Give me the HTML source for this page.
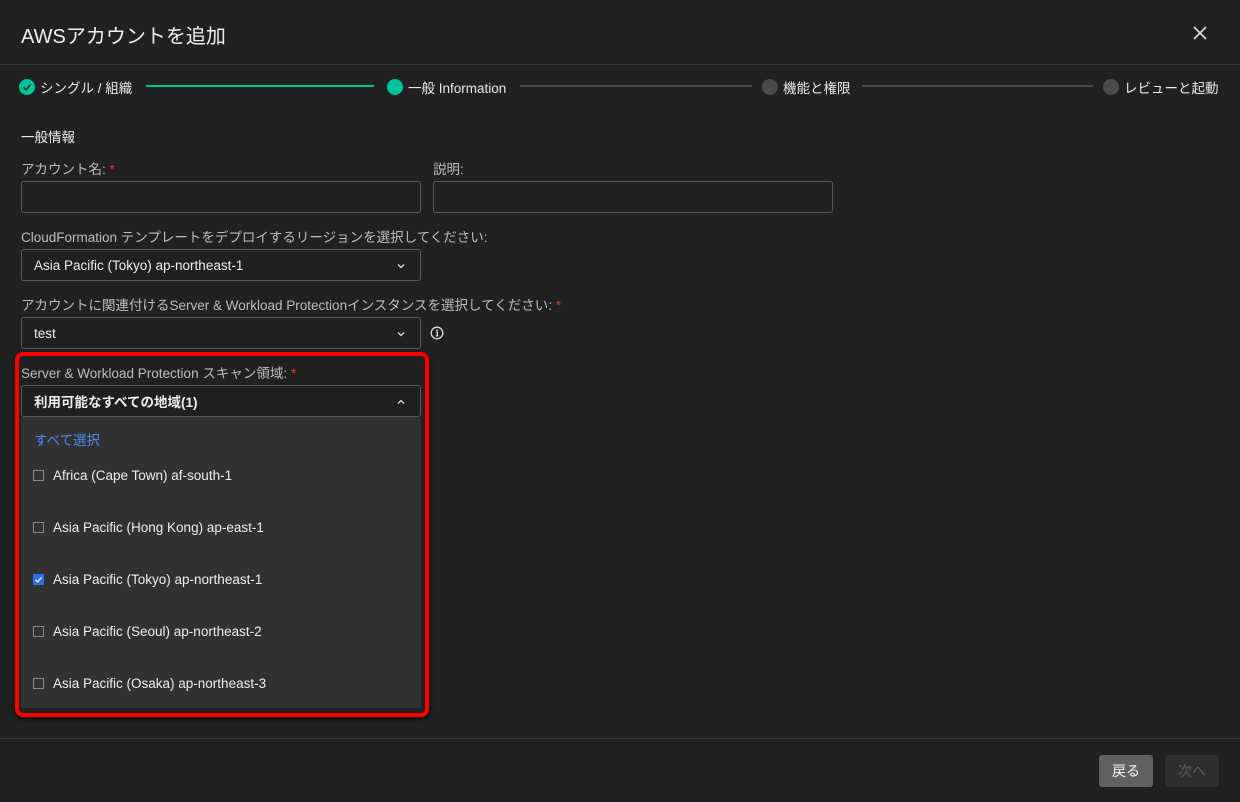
<!DOCTYPE html>
<html><head><meta charset="utf-8"><style>
*{box-sizing:border-box;margin:0;padding:0}
body{width:1240px;height:802px;background:#212121;font-family:"Liberation Sans","Noto Sans CJK JP",sans-serif;color:#e6e6e6;position:relative;overflow:hidden;font-size:13.5px}
.abs{position:absolute}
.title{left:21px;top:20px;font-size:20px;color:#f0f0f0}
.hline{left:0;width:1240px;height:1px;background:#3a3a3a}
.step{top:77px;font-size:13.5px;color:#e8e8e8;display:flex;align-items:center;white-space:nowrap}
.dot{width:16px;height:16px;border-radius:50%;background:#4a4a4a;margin-right:5px;display:inline-block}
.dot.on{background:#00c39a}
.line{top:85px;height:2px;background:#4a4a4a}
.lbl{font-size:13.5px;color:#bdbdbd;white-space:nowrap}
.req{color:#e53935}
.inp{border:1px solid #5a5a5a;border-radius:3px;background:#202020;height:32px}
.sel{display:flex;align-items:center;padding-left:12px;color:#eee;font-size:13.5px}
.chev{position:absolute;right:14px;top:12px}
.opt{left:33px;display:flex;align-items:center;font-size:13.5px;color:#eee}
.cb{width:11px;height:11px;border:1px solid #8a8a8a;margin-right:9px;background:transparent}
.cb.on{background:#2e6df0;border-color:#2e6df0;position:relative}
.btn{top:755px;height:32px;border-radius:3px;font-size:14px;display:flex;align-items:center;justify-content:center}
</style></head><body>
<div class="abs title">AWSアカウントを追加</div>
<svg class="abs" style="left:1192px;top:25px" width="16" height="16" viewBox="0 0 16 16"><path d="M2 2L14 14M14 2L2 14" stroke="#e0e0e0" stroke-width="1.6"/></svg>
<div class="abs hline" style="top:64px"></div>

<div class="abs step" style="left:19px"><span class="dot on" style="position:relative"><svg width="16" height="16" viewBox="0 0 16 16" style="position:absolute;left:0;top:0"><path d="M4.5 8.3L7 10.8L11.5 5.5" stroke="#1d1d1d" stroke-width="1.4" fill="none"/></svg></span>シングル / 組織</div>
<div class="abs line" style="left:146px;width:228px;background:#00c39a"></div>
<div class="abs step" style="left:387px"><span class="dot on"></span>一般 Information</div>
<div class="abs line" style="left:520px;width:232px"></div>
<div class="abs step" style="left:762px"><span class="dot"></span>機能と権限</div>
<div class="abs line" style="left:862px;width:231px"></div>
<div class="abs step" style="left:1103px"><span class="dot"></span>レビューと起動</div>

<div class="abs" style="left:21px;top:126px;font-size:13.5px;color:#eee">一般情報</div>
<div class="abs lbl" style="left:21px;top:158px">アカウント名: <span class="req">*</span></div>
<div class="abs inp" style="left:21px;top:181px;width:400px"></div>
<div class="abs lbl" style="left:433px;top:158px">説明:</div>
<div class="abs inp" style="left:433px;top:181px;width:400px"></div>

<div class="abs lbl" style="left:21px;top:226px">CloudFormation テンプレートをデプロイするリージョンを選択してください:</div>
<div class="abs inp sel" style="left:21px;top:249px;width:400px">Asia Pacific (Tokyo) ap-northeast-1<svg class="chev" width="10" height="8" viewBox="0 0 10 8"><path d="M2 2.5L5 5.5L8 2.5" stroke="#ddd" stroke-width="1.3" fill="none"/></svg></div>

<div class="abs lbl" style="left:21px;top:294px">アカウントに関連付けるServer &amp; Workload Protectionインスタンスを選択してください: <span class="req">*</span></div>
<div class="abs inp sel" style="left:21px;top:317px;width:400px">test<svg class="chev" width="10" height="8" viewBox="0 0 10 8"><path d="M2 2.5L5 5.5L8 2.5" stroke="#ddd" stroke-width="1.3" fill="none"/></svg></div>
<svg class="abs" style="left:430px;top:326px" width="14" height="14" viewBox="0 0 14 14"><circle cx="7" cy="7" r="5.8" stroke="#ddd" stroke-width="1.3" fill="none"/><circle cx="7" cy="4.3" r="0.9" fill="#ddd"/><path d="M6 6.2H7.4V9.8M5.8 9.9H8.3" stroke="#ddd" stroke-width="1.2" fill="none"/></svg>

<div class="abs" style="left:15px;top:352px;width:414px;height:365px;border:4px solid #ff0000;border-radius:8px;box-shadow:0 2px 6px rgba(0,0,0,.6)"></div>
<div class="abs lbl" style="left:21px;top:362px">Server &amp; Workload Protection スキャン領域: <span class="req">*</span></div>
<div class="abs inp sel" style="left:21px;top:385px;width:400px;height:32px;font-weight:bold;background:#1f1f1f">利用可能なすべての地域(1)<svg class="chev" width="10" height="8" viewBox="0 0 10 8"><path d="M2 5.5L5 2.5L8 5.5" stroke="#ddd" stroke-width="1.3" fill="none"/></svg></div>
<div class="abs" style="left:21px;top:417px;width:400px;height:291px;background:#313131"></div>
<div class="abs" style="left:34px;top:429px;color:#4f8cf0;font-size:13.5px">すべて選択</div>
<div class="abs opt" style="top:468px"><span class="cb"></span>Africa (Cape Town) af-south-1</div>
<div class="abs opt" style="top:520px"><span class="cb"></span>Asia Pacific (Hong Kong) ap-east-1</div>
<div class="abs opt" style="top:572px"><span class="cb on"><svg width="11" height="11" viewBox="0 0 11 11" style="position:absolute;left:-1px;top:-1px"><path d="M2.5 5.8L4.5 7.8L8.7 3.3" stroke="#fff" stroke-width="1.3" fill="none"/></svg></span>Asia Pacific (Tokyo) ap-northeast-1</div>
<div class="abs opt" style="top:624px"><span class="cb"></span>Asia Pacific (Seoul) ap-northeast-2</div>
<div class="abs opt" style="top:676px"><span class="cb"></span>Asia Pacific (Osaka) ap-northeast-3</div>

<div class="abs hline" style="top:738px"></div>
<div class="abs btn" style="left:1099px;width:54px;background:#616161;color:#f5f5f5">戻る</div>
<div class="abs btn" style="left:1165px;width:54px;background:#2e2e2e;color:#5e5e5e">次へ</div>
</body></html>
